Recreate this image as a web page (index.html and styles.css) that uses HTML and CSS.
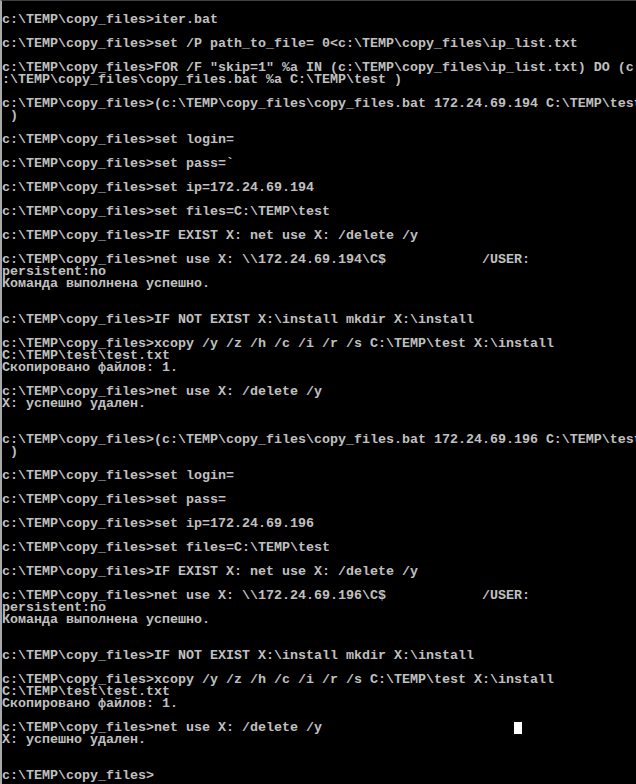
FILE: index.html
```html
<!DOCTYPE html>
<html lang="ru">
<head>
<meta charset="utf-8">
<title>Command Prompt</title>
<link rel="stylesheet" href="styles.css">
</head>
<body>
<div class="console">
<pre class="screen">

c:\TEMP\copy_files&gt;iter.bat

c:\TEMP\copy_files&gt;set /P path_to_file= 0&lt;c:\TEMP\copy_files\ip_list.txt

c:\TEMP\copy_files&gt;FOR /F "skip=1" %a IN (c:\TEMP\copy_files\ip_list.txt) DO (c
:\TEMP\copy_files\copy_files.bat %a C:\TEMP\test )

c:\TEMP\copy_files&gt;(c:\TEMP\copy_files\copy_files.bat 172.24.69.194 C:\TEMP\test
 )

c:\TEMP\copy_files&gt;set login=

c:\TEMP\copy_files&gt;set pass=`

c:\TEMP\copy_files&gt;set ip=172.24.69.194

c:\TEMP\copy_files&gt;set files=C:\TEMP\test

c:\TEMP\copy_files&gt;IF EXIST X: net use X: /delete /y

c:\TEMP\copy_files&gt;net use X: \\172.24.69.194\C$            /USER:                 -
persistent:no
Команда выполнена успешно.


c:\TEMP\copy_files&gt;IF NOT EXIST X:\install mkdir X:\install

c:\TEMP\copy_files&gt;xcopy /y /z /h /c /i /r /s C:\TEMP\test X:\install
C:\TEMP\test\test.txt
Скопировано файлов: 1.

c:\TEMP\copy_files&gt;net use X: /delete /y
X: успешно удален.


c:\TEMP\copy_files&gt;(c:\TEMP\copy_files\copy_files.bat 172.24.69.196 C:\TEMP\test
 )

c:\TEMP\copy_files&gt;set login=

c:\TEMP\copy_files&gt;set pass=

c:\TEMP\copy_files&gt;set ip=172.24.69.196

c:\TEMP\copy_files&gt;set files=C:\TEMP\test

c:\TEMP\copy_files&gt;IF EXIST X: net use X: /delete /y

c:\TEMP\copy_files&gt;net use X: \\172.24.69.196\C$            /USER:                 -
persistent:no
Команда выполнена успешно.


c:\TEMP\copy_files&gt;IF NOT EXIST X:\install mkdir X:\install

c:\TEMP\copy_files&gt;xcopy /y /z /h /c /i /r /s C:\TEMP\test X:\install
C:\TEMP\test\test.txt
Скопировано файлов: 1.

c:\TEMP\copy_files&gt;net use X: /delete /y                        <span class="cursor"> </span>
X: успешно удален.


c:\TEMP\copy_files&gt;
</pre>
</div>
</body>
</html>
```

FILE: styles.css
```css
html, body {
  margin: 0;
  padding: 0;
  background: #000;
  overflow: hidden;
}

.console {
  width: 634px;
  height: 783px;
  background: #000;
  border-left: 2px solid #a8a8a8;
  border-top: 1px solid #404040;
  overflow: hidden;
}

.screen {
  margin: 0;
  padding: 1px 0 0 0;
  font-family: "Liberation Mono", "DejaVu Sans Mono", monospace;
  font-weight: bold;
  font-size: 13.333px;
  line-height: 12px;
  color: #c0c0c0;
  white-space: pre;
}

.cursor {
  display: inline-block;
  width: 8px;
  height: 12px;
  vertical-align: top;
  background: #fff;
}
```
